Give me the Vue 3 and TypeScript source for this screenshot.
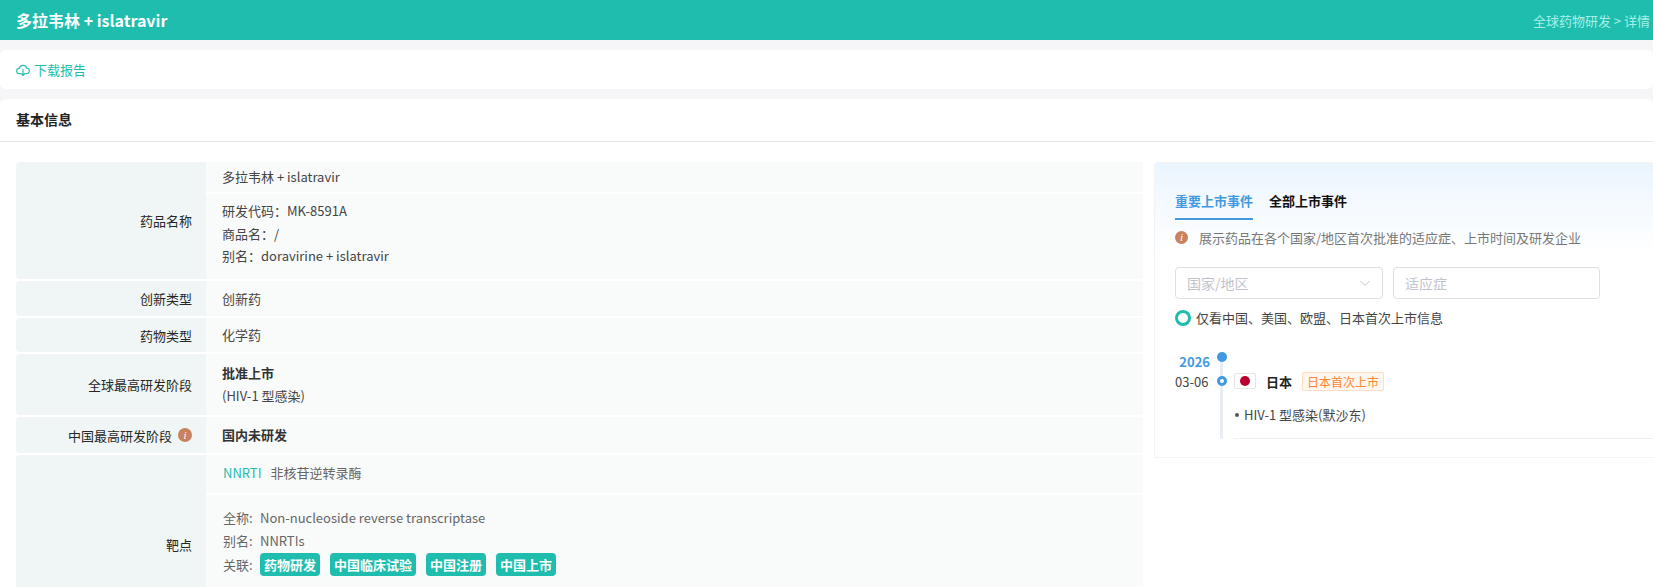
<script setup lang="ts">
const relatedTags = ['药物研发', '中国临床试验', '中国注册', '中国上市']
</script>

<template>
  <div class="page">
    <header class="top-bar">
      <h1 class="drug-title">多拉韦林 + islatravir</h1>
      <div class="crumb">全球药物研发 &gt; 详情</div>
    </header>

    <div class="toolbar">
      <a class="download">
        <svg width="14" height="14" viewBox="0 0 16 16" fill="none" stroke="#1fbdad" stroke-width="1.3" stroke-linecap="round" stroke-linejoin="round">
          <path d="M4.6 12.2H4a3 3 0 0 1-.4-6A4.5 4.5 0 0 1 12.3 6 3.1 3.1 0 0 1 12 12.2h-.6" />
          <path d="M8 7.2v7M5.8 12 8 14.2 10.2 12" />
        </svg>
        下载报告
      </a>
    </div>

    <section class="card">
      <div class="card-title">基本信息</div>
      <div class="card-body">
        <div class="info-table">
          <div class="row">
            <div class="label">药品名称</div>
            <div class="value">
              <div class="cell first-name">多拉韦林 + islatravir</div>
              <div class="cell names">
                <div>研发代码：MK-8591A</div>
                <div>商品名：/</div>
                <div>别名：doravirine + islatravir</div>
              </div>
            </div>
          </div>
          <div class="row">
            <div class="label">创新类型</div>
            <div class="value"><div class="cell single">创新药</div></div>
          </div>
          <div class="row">
            <div class="label">药物类型</div>
            <div class="value"><div class="cell single short">化学药</div></div>
          </div>
          <div class="row">
            <div class="label">全球最高研发阶段</div>
            <div class="value">
              <div class="cell stage">
                <div class="strong">批准上市</div>
                <div>(HIV-1 型感染)</div>
              </div>
            </div>
          </div>
          <div class="row">
            <div class="label">
              中国最高研发阶段
              <span class="info-dot">i</span>
            </div>
            <div class="value"><div class="cell single china strong">国内未研发</div></div>
          </div>
          <div class="row">
            <div class="label">靶点</div>
            <div class="value">
              <div class="cell target-head">
                <span class="target-code">NNRTI</span>
                <span>非核苷逆转录酶</span>
              </div>
              <div class="cell target-info">
                <div class="pair"><span class="key">全称:</span>Non-nucleoside reverse transcriptase</div>
                <div class="pair"><span class="key">别名:</span>NNRTIs</div>
                <div class="pair tags-line">
                  <span class="key">关联:</span>
                  <span v-for="tag in relatedTags" :key="tag" class="link-tag">{{ tag }}</span>
                </div>
              </div>
            </div>
          </div>
        </div>

        <aside class="events">
          <div class="tabs">
            <span class="tab active">重要上市事件</span>
            <span class="tab">全部上市事件</span>
          </div>
          <div class="hint">
            <span class="info-dot small">i</span>
            展示药品在各个国家/地区首次批准的适应症、上市时间及研发企业
          </div>
          <div class="filters">
            <div class="field country-field">
              国家/地区
              <svg width="12" height="12" viewBox="0 0 12 12" fill="none" stroke="#c0c4cc" stroke-width="1">
                <path d="M1.5 4 6 8.5 10.5 4" />
              </svg>
            </div>
            <div class="field">适应症</div>
          </div>
          <label class="only-major">
            <span class="radio"></span>
            仅看中国、美国、欧盟、日本首次上市信息
          </label>

          <div class="timeline">
            <div class="year-row">
              <span class="year">2026</span>
              <span class="dot-big"></span>
            </div>
            <div class="event-row">
              <span class="date">03-06</span>
              <span class="dot-ring"></span>
              <span class="flag"><i></i></span>
              <span class="country">日本</span>
              <span class="first-tag">日本首次上市</span>
            </div>
            <div class="event-detail">
              <span class="bullet"></span>
              HIV-1 型感染(默沙东)
            </div>
          </div>
        </aside>
      </div>
    </section>
  </div>
</template>

<style scoped>
.page {
  width: 100vw;
  height: 587px;
  overflow: hidden;
  background: #f6f6f8;
  font-family: "Noto Sans CJK SC", "Noto Sans", sans-serif;
  font-size: 13px;
  line-height: 23px;
  color: #333;
}

.top-bar {
  height: 40px;
  background: #1fbdad;
  display: flex;
  align-items: center;
  justify-content: space-between;
  padding: 0 3px 0 16px;
}

.drug-title {
  margin: 0;
  font-size: 16px;
  font-weight: 700;
  color: #fff;
}

.crumb {
  font-size: 13px;
  color: #a5efe6;
}

.toolbar {
  margin-top: 10px;
  height: 39px;
  background: #fff;
  border-radius: 6px;
  padding: 0 16px;
  display: flex;
  align-items: center;
}

.download {
  display: flex;
  align-items: center;
  gap: 4px;
  font-size: 13px;
  color: #1fbdad;
}

.card {
  margin-top: 10px;
  height: 488px;
  background: #fff;
  border-radius: 6px 6px 0 0;
}

.card-title {
  height: 42px;
  padding-left: 16px;
  line-height: 41px;
  font-size: 14px;
  font-weight: 700;
  color: #222;
  border-bottom: 1px solid #e8e8ea;
}

.card-body {
  display: flex;
  gap: 11px;
  padding: 20px 0 0 16px;
}

.info-table {
  flex: none;
  width: 1127px;
  display: flex;
  flex-direction: column;
  gap: 2px;
}

.row {
  display: flex;
}

.label {
  flex: none;
  width: 190px;
  padding-right: 14px;
  box-sizing: border-box;
  background: #eff6f5;
  border-radius: 4px 0 0 4px;
  display: flex;
  align-items: center;
  justify-content: flex-end;
  gap: 6px;
  color: #262626;
}

.value {
  flex: 1;
  display: flex;
  flex-direction: column;
  gap: 2px;
}

.cell {
  background: #f9fbfb;
  padding: 0 16px;
  color: #444;
}

.first-name {
  height: 30px;
  line-height: 30px;
}

.names {
  padding-top: 6px;
  height: 79px;
  line-height: 22.5px;
}

.single {
  height: 35px;
  line-height: 35px;
}

.short {
  height: 34px;
  line-height: 34px;
}

.china {
  height: 36px;
  line-height: 36px;
}

.stage {
  height: 61px;
  padding-top: 7px;
  box-sizing: border-box;
}

.strong {
  font-weight: 700;
  color: #333;
}

.target-head {
  height: 38px;
  line-height: 36px;
  padding-left: 17px;
  color: #666;
}

.target-code {
  color: #1fbdad;
  margin-right: 9px;
}

.target-info {
  height: 128px;
  padding: 11px 0 0 17px;
  color: #666;
}

.pair {
  display: flex;
}

.tags-line {
  margin-top: 1px;
}

.key {
  width: 37px;
  flex: none;
}

.link-tag {
  height: 23px;
  line-height: 23px;
  padding: 0 4px;
  margin-right: 10px;
  border-radius: 4px;
  background: #1fbdad;
  color: #fff;
  font-weight: 700;
}

.info-dot {
  flex: none;
  display: inline-block;
  width: 14px;
  height: 14px;
  border-radius: 50%;
  background: #c98260;
  color: #fff;
  font-family: "Liberation Serif", serif;
  font-size: 11px;
  font-style: italic;
  line-height: 14px;
  text-align: center;
}

.info-dot.small {
  width: 13px;
  height: 13px;
  line-height: 13px;
}

.events {
  flex: none;
  width: 520px;
  height: 296px;
  box-sizing: border-box;
  border: 1px solid #f2f3f5;
  padding: 20px 0 0 20px;
  background: linear-gradient(180deg, #ebf5fe 0, #fff 90px);
  border-radius: 4px 0 0 0;
}

.tabs {
  display: flex;
  gap: 16px;
  height: 36px;
}

.tab {
  font-weight: 700;
  color: #111;
  line-height: 36px;
}

.tab.active {
  color: #4299e1;
  border-bottom: 2px solid #4299e1;
  height: 35px;
}

.hint {
  display: flex;
  align-items: center;
  gap: 11px;
  margin-top: 7px;
  color: #777;
}

.filters {
  display: flex;
  gap: 10px;
  margin-top: 18px;
}

.field {
  width: 207px;
  height: 32px;
  box-sizing: border-box;
  border: 1px solid #dcdfe6;
  border-radius: 4px;
  padding: 0 11px;
  background: #fff;
  color: #c0c4cc;
  font-size: 14px;
  line-height: 30px;
  display: flex;
  align-items: center;
  justify-content: space-between;
}

.country-field {
  width: 208px;
}

.only-major {
  display: flex;
  align-items: center;
  gap: 5px;
  margin-top: 7px;
  color: #444;
}

.radio {
  width: 16px;
  height: 16px;
  box-sizing: border-box;
  border: 3px solid #1fbdad;
  border-radius: 50%;
  background: #fff;
}

.timeline {
  position: relative;
  margin-top: 23px;
}

/* vertical rail behind the dots */
.timeline::before {
  content: "";
  position: absolute;
  left: 45px;
  top: 0;
  width: 3px;
  height: 87px;
  background: #e9eef6;
}

.year-row {
  display: flex;
  height: 16px;
}

.year {
  flex: none;
  width: 35px;
  text-align: right;
  color: #4299e1;
  font-weight: 700;
  line-height: 20px;
}

.dot-big {
  position: relative;
  margin-left: 7px;
  width: 10px;
  height: 10px;
  border-radius: 50%;
  background: #4299e1;
}

.event-row {
  display: flex;
  align-items: center;
  height: 26px;
}

.date {
  flex: none;
  width: 33px;
  white-space: nowrap;
  color: #444;
}

.dot-ring {
  position: relative;
  flex: none;
  margin-left: 9px;
  width: 10px;
  height: 10px;
  box-sizing: border-box;
  border: 3px solid #4299e1;
  border-radius: 50%;
  background: #fff;
}

.flag {
  flex: none;
  margin-left: 7px;
  width: 22px;
  height: 16px;
  box-sizing: border-box;
  border: 1px solid #e5e5e5;
  border-radius: 2px;
  background: #fff;
  display: flex;
  align-items: center;
  justify-content: center;
}

.flag i {
  width: 10px;
  height: 10px;
  border-radius: 50%;
  background: #bc002d;
}

.country {
  margin-left: 10px;
  font-weight: 700;
  color: #222;
}

.first-tag {
  margin-left: 10px;
  height: 19px;
  line-height: 17px;
  box-sizing: border-box;
  padding: 0 4px;
  border: 1px solid #ffdcc2;
  border-radius: 2px;
  background: #fff7f0;
  color: #ff8534;
  font-size: 12px;
}

.event-detail {
  margin-left: 59px;
  height: 41px;
  padding-bottom: 3px;
  border-bottom: 1px solid #eef0f3;
  display: flex;
  align-items: center;
  gap: 5px;
  color: #444;
}

.bullet {
  width: 4px;
  height: 4px;
  margin-left: 1px;
  border-radius: 50%;
  background: #555;
}
</style>

<style>
html,
body {
  margin: 0;
  overflow: hidden;
}
</style>
